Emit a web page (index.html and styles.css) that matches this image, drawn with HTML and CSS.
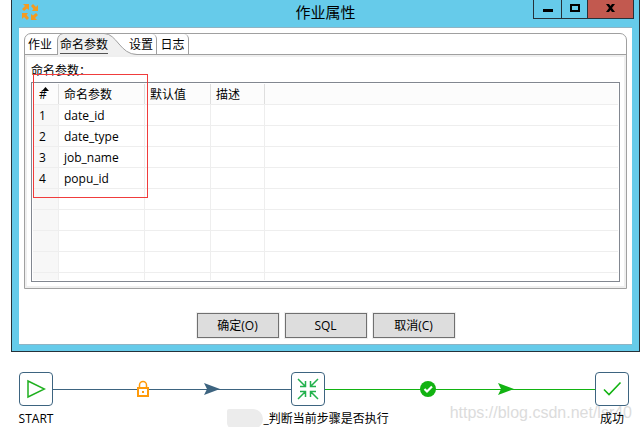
FILE: index.html
```html
<!DOCTYPE html>
<html lang="zh-CN">
<head>
    <meta charset="UTF-8">
    <meta name="viewport" content="width=device-width, initial-scale=1.0">
    <title>作业属性</title>
    <link rel="stylesheet" href="styles.css">
</head>
<body>
    <section class="window">
        <header class="titlebar">
            <svg class="app-icon" width="18" height="18" viewBox="0 0 18 18">
                <g fill="#f49b20">
                    <path id="arrow" d="M2 1h6v6L6 5.500 3 8 1 6l3-3z"/>
                    <use href="#arrow" transform="rotate(90 9 9)"/>
                    <use href="#arrow" transform="rotate(180 9 9)"/>
                    <use href="#arrow" transform="rotate(270 9 9)"/>
                </g>
            </svg>
            <h1>作业属性</h1>
            <div class="window-controls">
                <button class="minimize" aria-label="最小化">
                    <svg width="10" height="9" viewBox="0 0 10 9"><path d="M0 6h10v3H0z"/></svg>
                </button>
                <button class="maximize" aria-label="最大化">
                    <svg width="10" height="8" viewBox="0 0 10 8"><path d="M1 1h8v6H1z" fill="none" stroke="#000" stroke-width="2"/></svg>
                </button>
                <button class="close" aria-label="关闭">
                    <svg width="9" height="8" viewBox="0 0 9 8"><path d="M0 0h3l1.500 2L6 0h3L6 4l3 4H6L4.500 6 3 8H0l3-4z"/></svg>
                </button>
            </div>
        </header>

        <div class="client">
            <div class="tab-folder">
                <div class="tabs" role="tablist">
                    <button class="tab" role="tab">作业</button>
                    <button class="tab active" role="tab" aria-selected="true">
                        <svg class="tab-shape" width="81" height="22" viewBox="0 0 81 22">
                            <path d="M.5 22V7Q1 1.500 6 .5H47C60 .5 63 21.500 80 21.500V22z" fill="#f0f0f0"/>
                            <path d="M.5 22V7Q1 1.500 6 .5H47C60 .5 63 21.500 80 21.500" fill="none" stroke="#a0a0a0"/>
                        </svg>
                        <span>命名参数</span>
                    </button>
                    <button class="tab" role="tab">设置</button>
                    <button class="tab" role="tab">日志</button>
                </div>
                <div class="panel">
                    <h2>命名参数：</h2>
                    <div class="grid">
                        <table>
                            <thead>
                                <tr>
                                    <th class="col-num">#<svg class="sort" width="7" height="4" viewBox="0 0 7 4"><path d="M3.500 0L7 4H0z"/></svg></th>
                                    <th>命名参数</th>
                                    <th>默认值</th>
                                    <th>描述</th>
                                    <th></th>
                                </tr>
                            </thead>
                            <tbody>
                                <tr><td>1</td><td>date_id</td><td></td><td></td><td></td></tr>
                                <tr><td>2</td><td>date_type</td><td></td><td></td><td></td></tr>
                                <tr><td>3</td><td>job_name</td><td></td><td></td><td></td></tr>
                                <tr><td>4</td><td>popu_id</td><td></td><td></td><td></td></tr>
                                <tr><td></td><td></td><td></td><td></td><td></td></tr>
                                <tr><td></td><td></td><td></td><td></td><td></td></tr>
                                <tr><td></td><td></td><td></td><td></td><td></td></tr>
                                <tr><td></td><td></td><td></td><td></td><td></td></tr>
                                <tr><td></td><td></td><td></td><td></td><td></td></tr>
                            </tbody>
                        </table>
                        <div class="highlight"></div>
                    </div>
                </div>
            </div>
            <div class="actions">
                <button>确定(O)</button>
                <button>SQL</button>
                <button>取消(C)</button>
            </div>
        </div>
    </section>

    <section class="job">
        <div class="watermark">https://blog.csdn.net/lsr40</div>

        <div class="node">
            <div class="node-box">
                <svg width="20" height="20" viewBox="0 0 20 20"><path d="M2 2L18.500 10 2 18z" fill="none" stroke="#1fb01f" stroke-width="1.500"/></svg>
            </div>
            <span>START</span>
        </div>

        <div class="hop">
            <svg class="hop-state" width="14" height="18" viewBox="0 0 14 18">
                <path d="M2 8h10v8H2z" fill="#fff" stroke="#ff9a0a" stroke-width="2"/>
                <path d="M3.500 8V5a3.500 3.500 0 0 1 7 0v3" fill="none" stroke="#ff9a0a" stroke-width="1.500"/>
                <path d="M6 11h2v2H6z" fill="#ff9a0a"/>
            </svg>
            <svg class="hop-arrow" width="16" height="12" viewBox="0 0 16 12"><path d="M0 0l16 6-16 6 3-6z" fill="#3d6480"/></svg>
        </div>

        <div class="node">
            <div class="node-box">
                <svg width="22" height="22" viewBox="0 0 22 22">
                    <path d="M1 1l7 7M3 8.500h5.500V3M21 1l-7 7M19 8.500h-5.500V3M1 21l7-7M3 13.500h5.500V19M21 21l-7-7M19 13.500h-5.500V19" fill="none" stroke="#22b14c" stroke-width="1.500"/>
                </svg>
            </div>
            <span><i class="smudge"></i>_判断当前步骤是否执行</span>
        </div>

        <div class="hop success">
            <svg class="hop-state" width="16" height="16" viewBox="0 0 16 16">
                <circle cx="8" cy="8" r="8" fill="#12b312"/>
                <path d="M4.500 8L7 10.500 12 5.500" fill="none" stroke="#fff" stroke-width="2.200"/>
            </svg>
            <svg class="hop-arrow" width="16" height="12" viewBox="0 0 16 12"><path d="M0 0l16 6-16 6 3-6z" fill="#12b312"/></svg>
        </div>

        <div class="node">
            <div class="node-box">
                <svg width="20" height="16" viewBox="0 0 20 16"><path d="M2 8.500l5 5L18.500 1.500" fill="none" stroke="#12b312" stroke-width="1.600"/></svg>
            </div>
            <span>成功</span>
        </div>
    </section>
</body>
</html>
```

FILE: styles.css
```css
* {
    box-sizing: border-box;
}

body {
    margin: 0;
    background: #fff;
    color: #000;
    font-family: "Open Sans", "Noto Sans CJK SC", sans-serif;
    font-size: 12px;
    line-height: 16px;
}

h1,
h2 {
    margin: 0;
    font-weight: normal;
}

button {
    margin: 0;
    padding: 0;
    color: inherit;
    font: inherit;
}

svg {
    display: block;
}

.window {
    margin: 0 1px 0 11px;
    padding: 0 7px 6px;
    background: #66cbea;
    border: 1px solid #26323a;
    border-top: none;
}

.titlebar {
    display: grid;
    grid-template-columns: 1fr auto 1fr;
    align-items: start;
    height: 27px;
}

.app-icon {
    margin: 3px 0 0 2px;
}

.titlebar h1 {
    font-size: 15px;
    line-height: 24px;
}

.window-controls {
    display: flex;
    justify-content: flex-end;
    margin-right: -2px;
}

.window-controls button {
    display: flex;
    align-items: center;
    justify-content: center;
    height: 19px;
    padding-bottom: 3px;
    background: #66cbea;
    border: 1px solid #26323a;
    border-top: none;
    border-right: none;
}

.window-controls .minimize {
    width: 28px;
}

.window-controls .maximize {
    width: 26px;
}

.window-controls .close {
    width: 47px;
    background: #c2594f;
    border-right: 1px solid #26323a;
}

.client {
    padding: 5px 5px 6px;
    background: #fff;
    border-top: 1px solid #8fb4c4;
    border-bottom: 1px solid #8fb4c4;
}

.tab-folder {
    border: 1px solid #a0a0a0;
    border-radius: 7px 7px 0 0;
}

.tabs {
    display: flex;
    height: 21px;
    border-bottom: 1px solid #a0a0a0;
}

.tab {
    height: 20px;
    padding: 2px 3px 0;
    background: none;
    border: none;
    border-right: 1px solid #a0a0a0;
    border-radius: 0 5px 0 0;
}

.tab:first-child {
    width: 32px;
    border-right: none;
    text-align: left;
}

.tab.active {
    position: relative;
    width: 69px;
    padding-top: 0;
    border: none;
    text-align: left;
}

.tab.active span {
    position: relative;
    display: inline-block;
    height: 20px;
    line-height: 21px;
    border-bottom: 1px solid #555;
}

.tab-shape {
    position: absolute;
    top: -1px;
    left: 0;
}

.tab:nth-child(3) {
    position: relative;
    width: 31px;
}

.tab:last-child {
    width: 32px;
}

.panel {
    padding: 6px 4px 4px;
    border: 2px solid #efefef;
}

.panel h2 {
    padding-bottom: 3px;
    font-size: 12px;
}

.grid {
    position: relative;
    height: 200px;
    padding: 1px;
    border: 1px solid #828790;
}

.grid table {
    display: block;
    width: 100%;
    height: 196px;
    overflow: hidden;
    border-collapse: collapse;
}

.grid thead,
.grid tbody {
    display: block;
}

.grid tr {
    display: grid;
    grid-template-columns: 26px 86px 66px 54px 1fr;
    height: 21px;
    border-bottom: 1px solid #eee;
}

.grid th,
.grid td {
    padding: 3px 5px 0;
    border-right: 1px solid #eee;
    font-weight: normal;
    text-align: left;
}

.grid th {
    background: #fcfcfc;
    border-right-color: #dedede;
}

.grid th:first-child,
.grid td:first-child {
    padding-left: 6px;
}

.grid th:last-child,
.grid td:last-child {
    border-right: none;
}

.grid td:first-child {
    background: #f7f7f7;
}

.col-num {
    position: relative;
}

.sort {
    position: absolute;
    top: 3px;
    left: 9px;
}

/* red box drawn around the parameter names */
.highlight {
    position: absolute;
    top: -9px;
    left: 1px;
    width: 115px;
    height: 124px;
    border: 1px solid #f03c3c;
}

.actions {
    display: flex;
    justify-content: center;
    gap: 6px;
    padding-top: 24px;
}

.actions button {
    width: 82px;
    height: 25px;
    background: #ddd;
    border: 1px solid #707070;
    box-shadow: 0 0 0 1px #efefef;
}

.job {
    position: relative;
    display: flex;
    padding: 20px 12px 0 19px;
}

.node {
    position: relative;
    display: flex;
    flex-direction: column;
    align-items: center;
    gap: 5px;
    width: 34px;
    white-space: nowrap;
}

.node-box {
    display: flex;
    align-items: center;
    justify-content: center;
    width: 34px;
    height: 34px;
    border: 1px solid #3d6480;
    border-radius: 4px;
}

.node span {
    display: flex;
    align-items: center;
}

.smudge {
    width: 36px;
    height: 20px;
    margin: -2px 0;
    background: #ececec;
    border-radius: 2px 10px 10px 6px;
}

.hop {
    position: relative;
    flex: 238;
    height: 34px;
    background: linear-gradient(#3d6480, #3d6480) 0 17px / 100% 1px no-repeat;
}

.hop.success {
    flex: 270;
    background-image: linear-gradient(#12b312, #12b312);
}

.hop-state,
.hop-arrow {
    position: absolute;
    top: 50%;
    transform: translate(-50%, -50%);
}

.hop-state {
    left: 38%;
}

.hop-arrow {
    left: 67%;
}

.watermark {
    position: absolute;
    right: 9px;
    bottom: 0;
    padding-bottom: 6px;
    color: #dcdcdc;
    font-family: "Liberation Sans", sans-serif;
    font-size: 16px;
}
```
